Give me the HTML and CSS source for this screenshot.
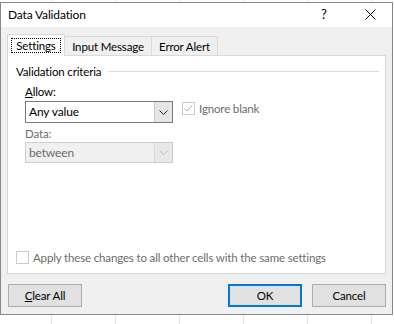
FILE: index.html
```html
<!DOCTYPE html>
<html lang="en">
<head>
  <meta charset="UTF-8" />
  <title>Data Validation</title>
  <link rel="stylesheet" href="styles.css">
</head>
<body>
  <div class="dialog">
    <div class="titlebar">
      <span class="title">Data Validation</span>
      <span class="help">?</span>
      <span class="close">
        <svg width="11" height="11" viewBox="0 0 11 11"><path d="M0.5 0.5 L10.5 10.5 M10.5 0.5 L0.5 10.5" stroke="#000" stroke-width="1" fill="none"/></svg>
      </span>
    </div>

    <div class="content">
      <div class="tabs">
        <div class="tab active"><span class="focus">Settings</span></div>
        <div class="tab tab-input">Input Message</div>
        <div class="tab tab-error">Error Alert</div>
      </div>

      <div class="panel">
        <div class="group-title">Validation criteria</div>

        <div class="criteria">
          <div class="col">
            <label class="lbl"><u>A</u>llow:</label>
            <div class="select">
              <span class="select-text">Any value</span>
              <span class="select-btn">
                <svg width="9" height="5" viewBox="0 0 9 5"><path d="M0.5 0.5 L4.5 4.5 L8.5 0.5" stroke="#222" fill="none"/></svg>
              </span>
            </div>
            <label class="lbl disabled">Data:</label>
            <div class="select off">
              <span class="select-text">between</span>
              <span class="select-btn">
                <svg width="9" height="5" viewBox="0 0 9 5"><path d="M0.5 0.5 L4.5 4.5 L8.5 0.5" stroke="#bcbcbc" fill="none"/></svg>
              </span>
            </div>
          </div>

          <div class="check-row ignore">
            <span class="box checked">
              <svg width="11" height="11" viewBox="0 0 11 11"><path d="M1.5 5.5 L4 8 L9.5 2" stroke="#b4b4b4" stroke-width="1" fill="none"/></svg>
            </span>
            <span class="disabled">Ignore blank</span>
          </div>
        </div>

        <div class="check-row apply">
          <span class="box"></span>
          <span class="disabled">Apply these changes to all other cells with the same settings</span>
        </div>
      </div>

      <div class="buttons">
        <button class="btn"><u>C</u>lear All</button>
        <div class="right-btns">
          <button class="btn default">OK</button>
          <button class="btn">Cancel</button>
        </div>
      </div>
    </div>
  </div>
</body>
</html>
```

FILE: styles.css
```css
body {
  margin: 0;
  height: 324px;
  overflow: hidden;
  font-family: Lato, 'Noto Sans', sans-serif;
  font-size: 11.5px;
  letter-spacing: -0.15px;
  color: #000;
  background-color: #fff;
  background-image: repeating-linear-gradient(90deg, transparent 0, transparent 51px, #e3e3e3 51px, #e3e3e3 52px, transparent 52px, transparent 64px);
}

.dialog {
  box-sizing: border-box;
  margin-top: 2px;
  width: 393px;
  height: 313px;
  border: 1px solid #888;
  background-color: #f0f0f0;
  display: flex;
  flex-direction: column;
}

.titlebar {
  box-sizing: border-box;
  height: 24px;
  padding-bottom: 2px;
  background-color: #fff;
  display: flex;
  align-items: center;
  padding-left: 7px;
}

.title {
  flex: 1;
  font-size: 12px;
}

.help {
  width: 14px;
  margin-right: 30px;
  font-size: 13px;
}

.close {
  width: 11px;
  height: 11px;
  margin-right: 16px;
  display: flex;
}

.content {
  flex: 1;
  padding: 7px 6px 0 6px;
  display: flex;
  flex-direction: column;
}

.tabs {
  display: flex;
  align-items: flex-end;
  height: 21px;
  padding-left: 1px;
  position: relative;
  z-index: 1;
}

.tab {
  box-sizing: border-box;
  height: 19px;
  border: 1px solid #d9d9d9;
  border-bottom: none;
  margin-left: -1px;
  display: flex;
  align-items: center;
  justify-content: center;
  background-color: #f0f0f0;
}

.tab.active {
  width: 58px;
  height: 22px;
  margin-bottom: -1px;
  background-color: #fff;
}

.tab-input {
  width: 88px;
}

.tab-error {
  width: 67px;
}

.focus {
  border: 1px dotted #000;
  width: 48px;
  text-align: center;
  line-height: 13px;
}

.panel {
  box-sizing: border-box;
  height: 219px;
  border: 1px solid #d9d9d9;
  background-color: #fff;
  display: flex;
  flex-direction: column;
  padding: 0 0 9px 0;
}

.group-title {
  display: flex;
  align-items: center;
  margin: 8px 6px 0 8px;
  height: 15px;
}

.group-title::after {
  content: "";
  flex: 1;
  height: 1px;
  margin-left: 7px;
  background-color: #dcdcdc;
}

.criteria {
  display: flex;
  padding-left: 17px;
  margin-top: 4px;
}

.col {
  width: 148px;
  display: flex;
  flex-direction: column;
}

.lbl {
  height: 17px;
  line-height: 17px;
}

.lbl.disabled {
  margin-top: 2px;
  height: 17px;
}

.disabled {
  color: #6d6d6d;
}

.select {
  box-sizing: border-box;
  height: 22px;
  border: 1px solid #7a7a7a;
  display: flex;
  margin-top: 1px;
  background-color: #fff;
}

.select-text {
  flex: 1;
  padding-left: 3px;
  line-height: 20px;
  font-size: 12px;
}

.select-btn {
  width: 17px;
  border-left: 1px solid #c8c8c8;
  background-color: #e6e6e6;
  display: flex;
  align-items: center;
  justify-content: center;
}

.select.off {
  height: 21px;
  margin-top: 0;
  border-color: #cccccc;
  background-color: #f0f0f0;
  color: #6d6d6d;
}

.select.off .select-btn {
  border-left-color: #dadada;
  background-color: #e8e8e8;
}

.check-row {
  display: flex;
  align-items: center;
}

.ignore {
  margin-left: 9px;
  align-self: flex-start;
  margin-top: 18px;
  height: 15px;
}

.box {
  box-sizing: border-box;
  width: 13px;
  height: 13px;
  border: 1px solid #cccccc;
  background-color: #fff;
  margin-right: 4px;
  display: flex;
  align-items: center;
  justify-content: center;
}

.apply {
  margin-top: auto;
  padding-left: 8px;
}

.buttons {
  display: flex;
  justify-content: space-between;
  margin-top: 10px;
  padding-left: 1px;
}

.right-btns {
  display: flex;
  gap: 10px;
}

.btn {
  box-sizing: border-box;
  width: 74px;
  height: 23px;
  border: 1px solid #adadad;
  background-color: #e1e1e1;
  font-family: inherit;
  font-size: 11.5px;
  letter-spacing: -0.15px;
  color: #000;
  padding: 0;
}

.btn.default {
  border: 2px solid #0078d7;
}
```
